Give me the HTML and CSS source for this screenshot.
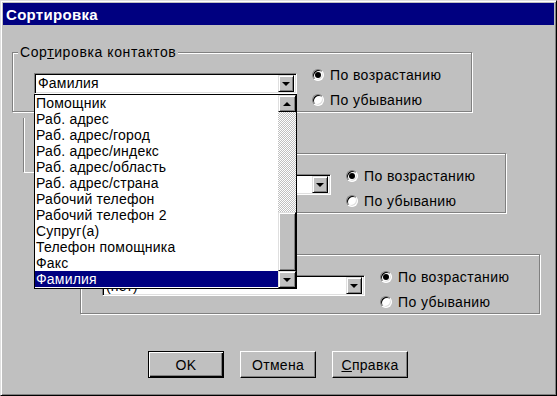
FILE: index.html
```html
<!DOCTYPE html>
<html lang="ru">
<head>
    <meta charset="UTF-8">
    <title>Сортировка</title>
    <link rel="stylesheet" href="styles.css">
</head>
<body>
    <div class="window">
        <div class="titlebar">Сортировка</div>

        <div class="content">
            <div class="group g1">
                <span class="legend">Сор<u>т</u>ировка контактов</span>
                <div class="combo">
                    <span class="combo-text">Фамилия</span>
                    <span class="raised drop-btn"><i class="arrow-down"></i></span>

                    <div class="listbox">
                        <ul class="items">
                            <li>Помощник</li>
                            <li>Раб. адрес</li>
                            <li>Раб. адрес/город</li>
                            <li>Раб. адрес/индекс</li>
                            <li>Раб. адрес/область</li>
                            <li>Раб. адрес/страна</li>
                            <li>Рабочий телефон</li>
                            <li>Рабочий телефон 2</li>
                            <li>Супруг(а)</li>
                            <li>Телефон помощника</li>
                            <li>Факс</li>
                            <li class="selected">Фамилия</li>
                        </ul>
                        <div class="scrollbar">
                            <span class="raised sb-btn"><i class="arrow-up"></i></span>
                            <span class="sb-track"></span>
                            <span class="raised sb-thumb"></span>
                            <span class="raised sb-btn"><i class="arrow-down"></i></span>
                        </div>
                    </div>
                </div>
                <div class="radios">
                    <label class="radio"><span class="dot checked"></span>По возрастанию</label>
                    <label class="radio"><span class="dot"></span>По убыванию</label>
                </div>
            </div>

            <!-- these two sit under the open list, only their right part shows -->
            <div class="group g2">
                <div class="combo">
                    <span class="combo-text"></span>
                    <span class="raised drop-btn"><i class="arrow-down"></i></span>
                </div>
                <div class="radios">
                    <label class="radio"><span class="dot checked"></span>По возрастанию</label>
                    <label class="radio"><span class="dot"></span>По убыванию</label>
                </div>
            </div>

            <div class="group g3">
                <div class="combo">
                    <span class="combo-text low">(нет)</span>
                    <span class="raised drop-btn"><i class="arrow-down"></i></span>
                </div>
                <div class="radios">
                    <label class="radio"><span class="dot checked"></span>По возрастанию</label>
                    <label class="radio"><span class="dot"></span>По убыванию</label>
                </div>
            </div>

            <div class="buttons">
                <button class="btn default">OK</button>
                <button class="btn">Отмена</button>
                <button class="btn"><u>С</u>правка</button>
            </div>
        </div>

        <div class="ghost"></div>
    </div>
</body>
</html>
```

FILE: styles.css
```css
* {
    box-sizing: border-box;
}

body {
    margin: 0;
    background: #c0c0c0;
    font-family: "Liberation Sans", Arial, sans-serif;
    font-size: 14px;
    letter-spacing: 0.2px;
    color: #000;
}

.window {
    position: relative;
    width: 557px;
    height: 396px;
    padding: 2px;
    background: #c0c0c0;
    border: 1px solid;
    border-color: #dfdfdf #000 #000 #dfdfdf;
    box-shadow: inset 1px 1px #fff, inset -1px -1px #808080;
}

.titlebar {
    height: 22px;
    padding-left: 3px;
    background: #000080;
    color: #fff;
    font-size: 15px;
    font-weight: bold;
    line-height: 23px;
    letter-spacing: 0.3px;
}

.content {
    padding-top: 27px;
}

/* etched group box */
.group {
    position: relative;
    display: flex;
    align-items: flex-start;
    width: 460px;
    height: 60px;
    padding: 9px 0 0 21px;
    border: 1px solid #808080;
    box-shadow: inset 1px 1px #fff, 1px 1px #fff;
}

.g1 {
    margin-left: 9px;
}

.g2 {
    margin: 41px 0 0 43px;
}

.g3 {
    margin: 41px 0 0 77px;
}

.legend {
    position: absolute;
    top: -9px;
    left: 5px;
    padding: 0 2px;
    background: #c0c0c0;
    line-height: 16px;
    letter-spacing: 0.6px;
}

.raised {
    background: #c0c0c0;
    border: 1px solid;
    border-color: #dfdfdf #000 #000 #dfdfdf;
    box-shadow: inset 1px 1px #fff, inset -1px -1px #808080;
}

.combo {
    position: relative;
    display: flex;
    align-items: center;
    width: 263px;
    height: 21px;
    margin-top: 11px;
    padding: 2px;
    background: #fff;
    border: 1px solid;
    border-color: #808080 #fff #fff #808080;
    box-shadow: inset 1px 1px #000, inset -1px -1px #dfdfdf;
}

.combo-text {
    flex: 1;
    padding-left: 1px;
    line-height: 17px;
    white-space: nowrap;
    overflow: hidden;
}

.combo-text.low {
    padding-top: 2px;
}

.drop-btn,
.sb-btn {
    display: flex;
    align-items: center;
    justify-content: center;
    width: 16px;
    height: 17px;
}

.arrow-down,
.arrow-up {
    width: 0;
    height: 0;
    border-left: 4px solid transparent;
    border-right: 4px solid transparent;
}

.arrow-down {
    border-top: 4px solid #000;
    margin-top: 1px;
}

.arrow-up {
    border-bottom: 4px solid #000;
}

/* open drop-down list */
.listbox {
    position: absolute;
    top: 20px;
    left: -1px;
    z-index: 10;
    display: flex;
    width: 263px;
    height: 195px;
    background: #fff;
    border: 1px solid #000;
}

.items {
    flex: 1;
    margin: 0;
    padding: 0 0 1px;
    list-style: none;
}

.items li {
    height: 16px;
    padding-left: 1px;
    line-height: 16px;
    white-space: nowrap;
}

.items li.selected {
    background: #000080;
    color: #fff;
}

.scrollbar {
    display: flex;
    flex-direction: column;
    width: 18px;
}

.scrollbar .sb-btn {
    width: 18px;
}

.sb-track {
    height: 100px;
    background-color: #fff;
    background-image: conic-gradient(#c0c0c0 25%, #fff 0 50%, #c0c0c0 0 75%, #fff 0);
    background-size: 2px 2px;
}

.sb-thumb {
    height: 59px;
}

.radios {
    display: flex;
    flex-direction: column;
    margin-left: 15px;
}

.radio {
    display: flex;
    align-items: center;
    gap: 6px;
    height: 25px;
    white-space: nowrap;
    letter-spacing: 0.4px;
}

.dot {
    position: relative;
    width: 12px;
    height: 12px;
    border-radius: 50%;
    background: #fff;
    border: 1px solid;
    border-color: #808080 #fff #fff #808080;
    box-shadow: inset 1px 1px #000, inset -1px -1px #dfdfdf;
}

.dot.checked::after {
    content: '';
    position: absolute;
    top: 2px;
    left: 2px;
    width: 6px;
    height: 6px;
    border-radius: 50%;
    background: #000;
}

.buttons {
    display: flex;
    gap: 16px;
    margin: 37px 0 0 145px;
}

.btn {
    width: 76px;
    height: 27px;
    padding: 0;
    font: inherit;
    letter-spacing: 0.3px;
    color: #000;
    background: #c0c0c0;
    border: 1px solid;
    border-color: #fff #000 #000 #fff;
    box-shadow: inset -1px -1px #808080;
}

.btn.default {
    border-color: #000;
    box-shadow: inset 1px 1px #fff, inset -1px -1px #000, inset -2px -2px #808080;
}

/* leftover of a redraw next to the list */
.ghost {
    position: absolute;
    top: 117px;
    left: 22px;
    width: 12px;
    height: 55px;
    border-left: 1px solid #808080;
    border-bottom: 1px solid #fff;
    box-shadow: inset 1px 0 #fff;
}
```
